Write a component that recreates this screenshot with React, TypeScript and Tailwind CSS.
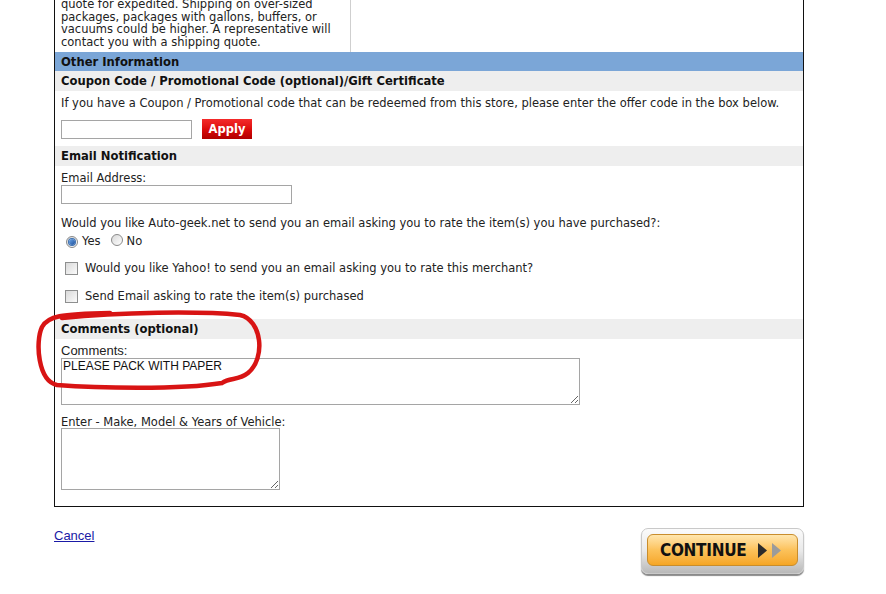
import React from "react";

const font = { fontFamily: '"DejaVu Sans", Verdana, sans-serif' };

function Radio({ checked }: { checked?: boolean }) {
  return (
    <span className="inline-flex h-[12px] w-[12px] items-center justify-center rounded-full border border-[#8a8a8a] bg-gradient-to-br from-[#d8d8d8] to-[#ffffff]">
      {checked && (
        <span className="block h-[6px] w-[6px] rounded-full bg-gradient-to-br from-[#6fa8e8] to-[#1b4f9c] ring-1 ring-[#3b6fb0]" />
      )}
    </span>
  );
}

function Checkbox() {
  return (
    <span className="inline-block h-[13px] w-[13px] border border-[#8e8f8f] bg-gradient-to-br from-[#d9d9d9] to-[#fbfbfb]" />
  );
}

function Bar({ children, blue, h }: { children: React.ReactNode; blue?: boolean; h: string }) {
  return (
    <div
      className={
        (blue ? "bg-[#7ba6d7] " : "bg-[#eeeeee] ") +
        h +
        " flex items-center whitespace-nowrap px-[6px] pt-[2px] font-bold text-[11.6px] text-[#111]"
      }
    >
      {children}
    </div>
  );
}

export default function App() {
  return (
    <div className="relative h-[594px] w-[886px] overflow-hidden bg-white text-[#222]" style={font}>
      <div className="ml-[54px] w-[750px] border-x border-b border-[#111]">
        {/* top cell */}
        <div className="flex h-[52px]">
          <div className="w-[296px] border-r border-[#cfcfcf] pl-[6px] text-[11.5px] leading-[12.5px]">
            <div className="-mt-[2px] whitespace-nowrap">
              quote for expedited. Shipping on over-sized
              <br />
              packages, packages with gallons, buffers, or
              <br />
              vacuums could be higher. A representative will
              <br />
              contact you with a shipping quote.
            </div>
          </div>
          <div className="flex-1" />
        </div>

        <Bar blue h="h-[19px]">Other Information</Bar>
        <Bar h="h-[20px]">Coupon Code / Promotional Code (optional)/Gift Certificate</Bar>

        <div className="px-[6px] text-[11.5px]">
          <div className="mt-[6px] whitespace-nowrap leading-[13px]">
            If you have a Coupon / Promotional code that can be redeemed from this store, please enter the offer code in the box below.
          </div>
          <div className="mt-[9px] flex h-[20px] items-center gap-[10px]">
            <input className="h-[19px] w-[131px] border border-[#a5a5a5] bg-white outline-none" />
            <button
              className="flex h-[20px] w-[50px] items-center justify-center bg-gradient-to-b from-[#f42a2a] via-[#dd0b0b] to-[#b00000] pt-[1px] text-[11.5px] font-bold text-white"
              style={font}
            >
              Apply
            </button>
          </div>
        </div>

        <div className="mt-[7px]">
          <Bar h="h-[20px]">Email Notification</Bar>
        </div>

        <div className="px-[6px] text-[11.5px]">
          <div className="mt-[6px] leading-[13px]">Email Address:</div>
          <input className="block h-[19px] w-[231px] border border-[#a5a5a5] bg-white outline-none" />
          <div className="mt-[13px] whitespace-nowrap leading-[13px]">
            Would you like Auto-geek.net to send you an email asking you to rate the item(s) you have purchased?:
          </div>
          <div className="mt-[5px] flex h-[13px] items-center pl-[5px] leading-[13px]">
            <Radio checked />
            <span className="ml-[4px]">Yes</span>
            <span className="ml-[10px]">
              <Radio />
            </span>
            <span className="ml-[4px]">No</span>
          </div>
          <div className="mt-[13px] flex h-[14px] items-center pl-[4px] leading-[13px]">
            <Checkbox />
            <span className="ml-[7px] whitespace-nowrap">Would you like Yahoo! to send you an email asking you to rate this merchant?</span>
          </div>
          <div className="mt-[14px] flex h-[14px] items-center pl-[4px] leading-[13px]">
            <Checkbox />
            <span className="ml-[7px] whitespace-nowrap">Send Email asking to rate the item(s) purchased</span>
          </div>
        </div>

        <div className="mt-[16px]">
          <Bar h="h-[20px]">Comments (optional)</Bar>
        </div>

        <div className="px-[6px] pb-[16px] text-[11.5px]">
          <div
            className="mt-[4px] text-[13px] leading-[15px] text-[#222]"
            style={{ fontFamily: '"Liberation Sans", Arial, sans-serif' }}
          >
            Comments:
          </div>
          <textarea
            className="block h-[47px] w-[519px] resize border border-[#a5a5a5] px-[1px] py-0 text-[12px] leading-[14px] text-[#111] outline-none"
            style={{ fontFamily: '"Liberation Sans", Arial, sans-serif' }}
            defaultValue="PLEASE PACK WITH PAPER"
          />
          <div className="mt-[11px] leading-[12px]">Enter - Make, Model &amp; Years of Vehicle:</div>
          <textarea className="block h-[62px] w-[219px] resize border border-[#a5a5a5] outline-none" />
        </div>
      </div>

      <div className="ml-[54px] mt-[21px] flex w-[750px] items-start justify-between">
        <a
          href="#"
          className="text-[13px] leading-[15px] text-[#1a1aa6] underline"
          style={{ fontFamily: '"Liberation Sans", Arial, sans-serif' }}
        >
          Cancel
        </a>
        <div className="relative h-[46px] w-[163px] rounded-[7px] border border-[#c9c9c9] bg-gradient-to-b from-[#fbfbfb] via-[#e9e9e9] to-[#b9b9b9] shadow-[0_2px_1px_#8a8a8a]">
          <div className="absolute left-[5px] right-[5px] top-[5px] flex h-[32px] items-center rounded-[6px] border border-[#c98d2c] bg-gradient-to-b from-[#ffe6ad] via-[#fcc25a] to-[#f5a623] pl-[12px]">
            <span
              className="text-[17px] font-bold leading-none tracking-[-0.3px] text-[#111]"
              style={{ fontFamily: '"DejaVu Sans Condensed", "DejaVu Sans", sans-serif' }}
            >
              CONTINUE
            </span>
            <svg width="24" height="15" viewBox="0 0 24 15" className="ml-[12px]">
              <polygon points="0,0 9,7.5 0,15" fill="#2b2b2b" />
              <polygon points="14,0 23,7.5 14,15" fill="#9b9b9b" />
            </svg>
          </div>
        </div>
      </div>

      {/* red hand-drawn circle */}
      <svg className="pointer-events-none absolute left-0 top-0" width="886" height="594">
        <path
          d="M 62 318 C 120 312, 200 311, 240 315 C 262 320, 266 358, 248 373 C 238 381, 230 377, 222 383 C 180 390, 95 388, 57 385 C 38 381, 35 342, 42 327 C 48 316, 60 314, 110 313"
          fill="none"
          stroke="#d81414"
          strokeWidth="4.5"
          strokeLinecap="round"
        />
      </svg>
    </div>
  );
}
